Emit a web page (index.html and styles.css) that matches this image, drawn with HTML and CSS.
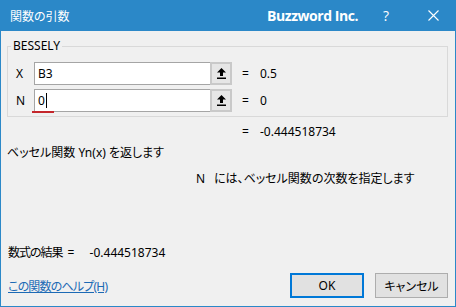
FILE: index.html
```html
<!DOCTYPE html>
<html lang="ja">
<head>
<meta charset="utf-8">
<link rel="stylesheet" href="styles.css">
</head>
<body>
<div class="window">
  <div class="titlebar">
    <span class="title">関数の引数</span>
    <span class="brand">Buzzword Inc.</span>
    <span class="tb-btn help">?</span>
    <span class="tb-btn close">
      <svg width="11" height="11" viewBox="0 0 11 11"><path d="M0.5 0.5 L10.5 10.5 M10.5 0.5 L0.5 10.5" stroke="#fff" stroke-width="1.1" fill="none"/></svg>
    </span>
  </div>
  <div class="content">
    <fieldset class="group">
      <legend>BESSELY</legend>
      <div class="arg-row first">
        <span class="arg-label">X</span>
        <div class="field"><span class="field-text">B3</span></div>
        <span class="ref-btn"><svg width="9" height="11" viewBox="0 0 9 11"><path d="M4.5 0 L9 4.5 H6 V8 H3 V4.5 H0 Z" fill="#000"/><rect x="0" y="9.5" width="9" height="1.5" fill="#000"/></svg></span>
        <span class="eq">=</span>
        <span class="val">0.5</span>
      </div>
      <div class="arg-row">
        <span class="arg-label">N</span>
        <div class="field"><span class="field-text">0</span><span class="caret"></span><span class="squiggle"></span></div>
        <span class="ref-btn"><svg width="9" height="11" viewBox="0 0 9 11"><path d="M4.5 0 L9 4.5 H6 V8 H3 V4.5 H0 Z" fill="#000"/><rect x="0" y="9.5" width="9" height="1.5" fill="#000"/></svg></span>
        <span class="eq">=</span>
        <span class="val">0</span>
      </div>
    </fieldset>
    <div class="result-row"><span class="eq">=</span><span class="val">-0.444518734</span></div>
    <p class="desc">ベッセル関数 Yn(x) を返します</p>
    <p class="arg-desc"><span class="arg-name">N</span>には、ベッセル関数の次数を指定します</p>
    <p class="formula"><span class="cjk-tight">数式の結果</span><span class="f-eq">=</span>-0.444518734</p>
    <div class="footer">
      <a class="help-link" href="#">この関数のヘルプ(H)</a>
      <div class="buttons">
        <button class="btn default">OK</button>
        <button class="btn">キャンセル</button>
      </div>
    </div>
  </div>
</div>
</body>
</html>
```
FILE: styles.css
```css
* { box-sizing: border-box; }
html, body { margin: 0; padding: 0; }
body {
  width: 456px;
  height: 307px;
  overflow: hidden;
  background: #f0f0f0;
  font-family: "Noto Sans", "Noto Sans CJK JP", sans-serif;
  font-feature-settings: "palt";
  font-size: 12px;
  color: #000;
}
.window {
  width: 456px;
  height: 307px;
  border: 1px solid #2b88c8;
  border-top: 0;
  background: #f0f0f0;
  display: flex;
  flex-direction: column;
}
.titlebar {
  height: 31px;
  margin: 0 -1px;
  background: #2b88c8;
  color: #fff;
  display: flex;
  align-items: center;
  padding-left: 10px;
}
.title {
  font-family: "Noto Sans CJK JP", sans-serif;
  font-size: 12px;
  flex: 1;
}
.brand {
  font-family: "Open Sans", sans-serif;
  font-weight: 700;
  font-size: 14px;
  letter-spacing: -0.45px;
  margin-right: 22px;
}
.tb-btn { display: flex; align-items: center; justify-content: center; }
.help { width: 12px; font-size: 14px; font-family: "Open Sans", sans-serif; margin-right: 35px; }
.close { width: 12px; margin-right: 17px; }
.content {
  flex: 1;
  padding: 0 7px 0 6px;
  display: flex;
  flex-direction: column;
}
.group {
  margin: 8px 0 0 0;
  padding: 0 0 4px 0;
  border: 1px solid #d9d9d9;
  width: 441px;
}
.group legend {
  padding: 0 2px;
  margin-left: 3px;
  line-height: 14px;
}
.arg-row {
  display: flex;
  align-items: center;
  height: 23px;
  margin-top: 4px;
}
.arg-row.first { margin-top: 9px; }
.arg-label {
  width: 26px;
  padding-left: 8px;
}
.field {
  position: relative;
  width: 176px;
  height: 23px;
  background: #fff;
  border: 1px solid #a5a5a5;
  border-right: 0;
  display: flex;
  align-items: center;
  padding-left: 3px;
}
.caret {
  width: 1px;
  height: 15px;
  background: #000;
  margin-left: 1px;
}
.squiggle {
  position: absolute;
  left: -3px;
  bottom: -2px;
  width: 22px;
  height: 2px;
  background: #c4262b;
}
.ref-btn {
  width: 22px;
  height: 23px;
  background: #e6e6e6;
  border: 2px solid #c9c9c9;
  display: flex;
  align-items: center;
  justify-content: center;
}
.eq { margin-left: 10px; width: 18px; }
.result-row {
  display: flex;
  margin-top: 7px;
  margin-left: 235px;
  line-height: 16px;
}
.result-row .eq { margin-left: 0; }
.desc {
  margin: 5px 0 0 0;
  line-height: 16px;
}
.arg-desc {
  margin: 10px 0 0 189px;
  line-height: 16px;
}
.arg-name { display: inline-block; width: 18px; }
.formula {
  margin: 58px 0 0 1px;
  line-height: 16px;
}
.cjk-tight { letter-spacing: -1px; }
.f-eq { display: inline-block; margin-left: 5px; width: 22px; }
.footer {
  display: flex;
  align-items: center;
  justify-content: space-between;
  margin-top: 12px;
}
.help-link {
  color: #1c6ab5;
  text-decoration: underline;
  margin-left: 1px;
  letter-spacing: -0.8px;
}
.buttons { display: flex; gap: 11px; }
.btn {
  height: 25px;
  font-family: "Noto Sans", "Noto Sans CJK JP", sans-serif;
  font-feature-settings: "palt";
  font-size: 12px;
  background: #e1e1e1;
  border: 1px solid #adadad;
  color: #000;
  padding: 0;
  width: 73px;
}
.btn.default {
  width: 74px;
  border: 2px solid #0078d7;
}
```
